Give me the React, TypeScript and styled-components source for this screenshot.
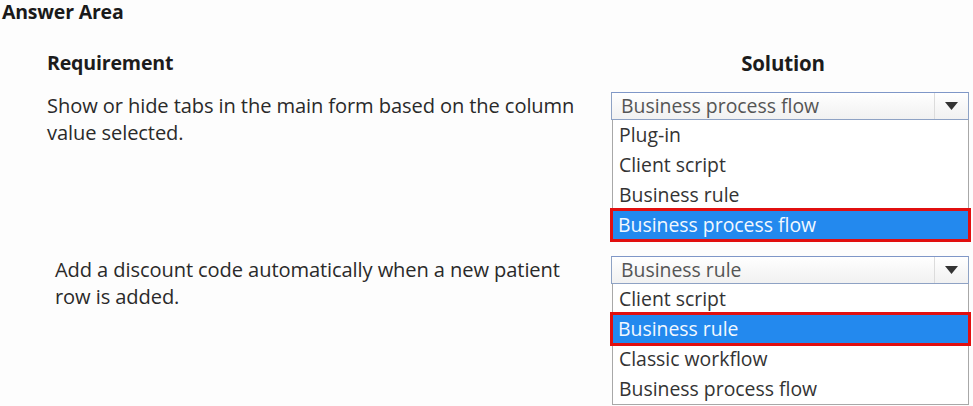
import React from "react";
import styled, { createGlobalStyle } from "styled-components";

const Global = createGlobalStyle`
  html, body { margin: 0; padding: 0; background: #ffffff; }
  body { font-family: "Open Sans", "Noto Sans", sans-serif; color: #222; }
  * { box-sizing: border-box; }
`;

const Page = styled.div`
  width: 973px;
  height: 406px;
  overflow: hidden;
  background: #fdfdfd;
  display: flex;
  flex-direction: column;
`;

const Title = styled.div`
  font-size: 19.5px;
  font-weight: 700;
  line-height: 22px;
  padding: 1px 0 1px 2px;
  letter-spacing: -0.2px;
  color: #1a1a1a;
`;

const Row = styled.div<{ $top: number }>`
  display: grid;
  grid-template-columns: 611px 362px;
  margin-top: ${(p) => p.$top}px;
`;

const HeadCell = styled.div<{ $center?: boolean }>`
  font-size: ${(p) => (p.$center ? "20.5px" : "19.6px")};
  font-weight: 700;
  line-height: 26px;
  color: #1c1c1c;
  padding-left: ${(p) => (p.$center ? "0" : "47px")};
  padding-right: ${(p) => (p.$center ? "18px" : "0")};
  text-align: ${(p) => (p.$center ? "center" : "left")};
  letter-spacing: -0.2px;
`;

const ReqText = styled.div<{ $indent: number; $width: number }>`
  font-size: 20.1px;
  line-height: 27px;
  color: #2a2a2a;
  padding-left: ${(p) => p.$indent}px;
  width: ${(p) => p.$width}px;
  letter-spacing: -0.1px;
`;

const Solution = styled.div`
  display: flex;
  flex-direction: column;
`;

const Select = styled.div`
  width: 358px;
  height: 28px;
  border: 1px solid #8ea2c4;
  border-top-color: #7f97c8;
  background: linear-gradient(#ffffff, #f1f1f1);
  display: flex;
  align-items: center;
`;

const SelectValue = styled.div`
  flex: 1;
  padding-left: 9px;
  font-size: 19.4px;
  line-height: 26px;
  color: #555;
  white-space: nowrap;
`;

const Arrow = styled.div`
  width: 34px;
  height: 100%;
  border-left: 1px solid #dcdcdc;
  display: flex;
  align-items: center;
  justify-content: center;
`;

const List = styled.div`
  margin-left: 1px;
  width: 357px;
  border: 1px solid #a8a8a8;
  border-top: none;
  background: #fff;
  display: flex;
  flex-direction: column;
`;

const Item = styled.div<{ $sel?: boolean }>`
  height: 30px;
  line-height: 30px;
  padding-left: 6px;
  font-size: 19.4px;
  white-space: nowrap;
  color: ${(p) => (p.$sel ? "#f2f8ff" : "#333")};
  background: ${(p) => (p.$sel ? "#2389ee" : "transparent")};
  outline: ${(p) => (p.$sel ? "3px solid #e10f0f" : "none")};
  outline-offset: -1px;
  margin: ${(p) => (p.$sel ? "0 -1px" : "0")};
  position: relative;
`;

const Tri = () => (
  <svg width="13" height="8" viewBox="0 0 13 8">
    <path d="M0 0 H13 L6.5 8 Z" fill="#333" />
  </svg>
);

type DD = { value: string; options: string[]; selected: string };

const Dropdown = ({ value, options, selected }: DD) => (
  <Solution>
    <Select>
      <SelectValue>{value}</SelectValue>
      <Arrow>
        <Tri />
      </Arrow>
    </Select>
    <List>
      {options.map((o) => (
        <Item key={o} $sel={o === selected}>
          {o}
        </Item>
      ))}
    </List>
  </Solution>
);

export default function App() {
  return (
    <Page>
      <Global />
      <Title>Answer Area</Title>
      <Row $top={26}>
        <HeadCell>Requirement</HeadCell>
        <HeadCell $center>Solution</HeadCell>
      </Row>
      <Row $top={16}>
        <ReqText $indent={47} $width={600}>
          Show or hide tabs in the main form based on the column value selected.
        </ReqText>
        <Dropdown
          value="Business process flow"
          options={["Plug-in", "Client script", "Business rule", "Business process flow"]}
          selected="Business process flow"
        />
      </Row>
      <Row $top={15}>
        <ReqText $indent={55} $width={580}>
          Add a discount code automatically when a new patient row is added.
        </ReqText>
        <Dropdown
          value="Business rule"
          options={["Client script", "Business rule", "Classic workflow", "Business process flow"]}
          selected="Business rule"
        />
      </Row>
    </Page>
  );
}
